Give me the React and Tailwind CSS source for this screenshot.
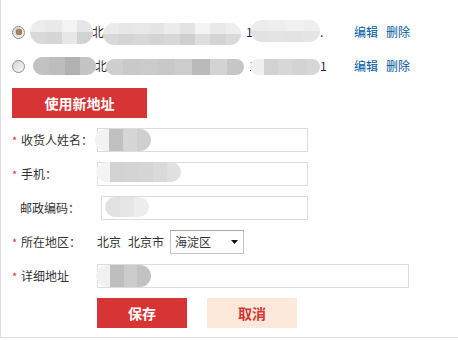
import React from "react";

function Blob({ w, h, cols, className = "" }) {
  return (
    <div
      className={`flex shrink-0 overflow-hidden rounded-full blur-[0.7px] ${className}`}
      style={{ width: w, height: h }}
    >
      {cols.map(([t, b], i) => (
        <div key={i} className="flex flex-1 flex-col">
          <div className="flex-1" style={{ background: t }} />
          <div className="flex-1" style={{ background: b }} />
        </div>
      ))}
    </div>
  );
}

function Radio({ checked }) {
  return (
    <div className="flex h-[13px] w-[13px] shrink-0 items-center justify-center rounded-full border border-[#8f8f8f] bg-gradient-to-br from-[#d6d6d6] to-[#f7f7f7]">
      {checked && <div className="h-[6px] w-[6px] rounded-full bg-[#a88152] shadow-[0_0_1px_#6b4d2a]" />}
    </div>
  );
}

function AddrRow({ checked, a, b, c, tail, dark }) {
  return (
    <div className="flex h-[24px] items-center pl-[11px]">
      <Radio checked={checked} />
      <Blob w={63} h={dark ? 18 : 24} cols={a} className={dark ? "ml-[8px]" : "ml-[5px]"} />
      <span className="-ml-[1px] w-[11px] leading-none">北</span>
      <Blob w={138} h={dark ? 16 : 22} cols={b} className={dark ? "mt-[2px]" : "mt-[4px]"} />
      <span className="ml-[5px] w-[6px] leading-none text-[#23235a]">1</span>
      <Blob w={dark ? 70 : 69} h={dark ? 16 : 22} cols={c} className={dark ? "-ml-[5px] mt-[2px]" : "-ml-[1px] -mt-[3px]"} />
      <span className="w-[6px] leading-none text-[#23235a]">{tail}</span>
      <a className="ml-[28px] leading-none text-[#005aa0]">编辑</a>
      <a className="ml-[8px] leading-none text-[#005aa0]">删除</a>
    </div>
  );
}

function Label({ star = true, children, pad = "pl-[11px]" }) {
  return (
    <div className={`flex w-[96px] shrink-0 items-center ${pad}`}>
      {star && <span className="w-[9px] text-[11px] leading-none text-[#d83434]">*</span>}
      <span className="leading-none">{children}</span>
    </div>
  );
}

export default function App() {
  return (
    <div className="h-[338px] w-[458px] border-b border-l border-[#dedede] bg-white pt-[20px] font-['Noto_Sans_CJK_SC',sans-serif] text-[12px] text-[#333]">
      <div className="flex flex-col gap-[10px]">
        <AddrRow
          checked
          a={[["#ececec", "#d9d9d9"], ["#e9e9e9", "#d6d6d6"], ["#f3f3f3", "#e7e7e7"], ["#e6e6e6", "#d2d2d2"]]}
          b={[["#ebebeb", "#d9d9d9"], ["#e7e7e7", "#d5d5d5"], ["#e8e8e8", "#d8d8d8"], ["#e5e5e5", "#d4d4d4"], ["#ececec", "#d8d8d8"], ["#e3e3e3", "#cfcfcf"], ["#f4f4f4", "#dedede"], ["#e9e9e9", "#d4d4d4"], ["#eeeeee", "#dadada"]]}
          c={[["#ececec", "#e2e2e2"], ["#eeeeee", "#e4e4e4"], ["#f1f1f1", "#e3e3e3"], ["#efefef", "#e5e5e5"]]}
          tail="."
        />
        <AddrRow
          dark
          a={[["#c2c2c2", "#c2c2c2"], ["#bdbdbd", "#bdbdbd"], ["#b1b1b1", "#b1b1b1"], ["#c4c4c4", "#c4c4c4"]]}
          b={[["#cfcfcf", "#cfcfcf"], ["#c9c9c9", "#c9c9c9"], ["#cbcbcb", "#cbcbcb"], ["#c8c8c8", "#c8c8c8"], ["#cdcdcd", "#cdcdcd"], ["#bababa", "#bababa"], ["#d3d3d3", "#d3d3d3"], ["#c6c6c6", "#c6c6c6"]]}
          c={[["#f0f0f0", "#f0f0f0"], ["#d2d2d2", "#d2d2d2"], ["#d7d7d7", "#d7d7d7"], ["#d3d3d3", "#d3d3d3"], ["#d6d6d6", "#d6d6d6"]]}
          tail="1"
        />
      </div>

      <div className="ml-[11px] mt-[10px] flex h-[30px] w-[135px] items-center justify-center bg-[#d73535] text-[14px] font-bold leading-none text-white">
        使用新地址
      </div>

      <div className="mt-[10px] flex flex-col gap-[10px]">
        <div className="flex h-[24px] items-center">
          <Label>收货人姓名：</Label>
          <div className="flex h-[24px] w-[211px] items-center border border-[#dcdcdc]">
            <Blob w={56} h={22} cols={[["#f2f2f2", "#f2f2f2"], ["#c0c0c0", "#c0c0c0"], ["#d6d6d6", "#d6d6d6"], ["#cfcfcf", "#cfcfcf"]]} className="-ml-[3px]" />
          </div>
        </div>

        <div className="flex h-[24px] items-center">
          <Label>手机：</Label>
          <div className="flex h-[24px] w-[211px] items-center border border-[#dcdcdc]">
            <Blob w={85} h={20} cols={[["#f4f4f4", "#f4f4f4"], ["#d2d2d2", "#d2d2d2"], ["#d4d4d4", "#d4d4d4"], ["#d6d6d6", "#d6d6d6"], ["#dadada", "#dadada"], ["#e0e0e0", "#e0e0e0"]]} className="-ml-[2px] -mt-[4px]" />
          </div>
        </div>

        <div className="flex h-[24px] items-center">
          <Label star={false} pad="pl-[19px]">邮政编码：</Label>
          <div className="ml-[4px] flex h-[24px] w-[207px] items-center border border-[#dcdcdc]">
            <Blob w={44} h={20} cols={[["#e2e2e2", "#e2e2e2"], ["#e6e6e6", "#e6e6e6"], ["#ededed", "#ededed"]]} className="ml-[3px] -mt-[3px]" />
          </div>
        </div>

        <div className="flex h-[24px] items-center">
          <Label>所在地区：</Label>
          <span className="leading-none">北京</span>
          <span className="ml-[7px] leading-none">北京市</span>
          <div className="ml-[6px] flex h-[24px] w-[74px] items-center justify-between border border-[#c4c4c4] border-t-[#a7a7a7] pl-[4px] pr-[5px]">
            <span className="leading-none">海淀区</span>
            <svg width="7" height="4" viewBox="0 0 7 4">
              <polygon points="0,0 7,0 3.5,4" fill="#111" />
            </svg>
          </div>
        </div>

        <div className="flex h-[24px] items-center">
          <Label>详细地址</Label>
          <div className="flex h-[24px] w-[312px] items-center border border-[#dcdcdc]">
            <Blob w={55} h={22} cols={[["#f1f1f1", "#f1f1f1"], ["#bebebe", "#bebebe"], ["#cccccc", "#cccccc"], ["#c2c2c2", "#c2c2c2"]]} className="-ml-[2px]" />
          </div>
        </div>

        <div className="flex h-[30px] items-center gap-[20px] pl-[96px]">
          <div className="flex h-[30px] w-[90px] items-center justify-center bg-[#d73535] text-[14px] font-bold leading-none text-white">
            保存
          </div>
          <div className="flex h-[30px] w-[90px] items-center justify-center bg-[#fde9da] text-[14px] font-bold leading-none text-[#d73535]">
            取消
          </div>
        </div>
      </div>
    </div>
  );
}
